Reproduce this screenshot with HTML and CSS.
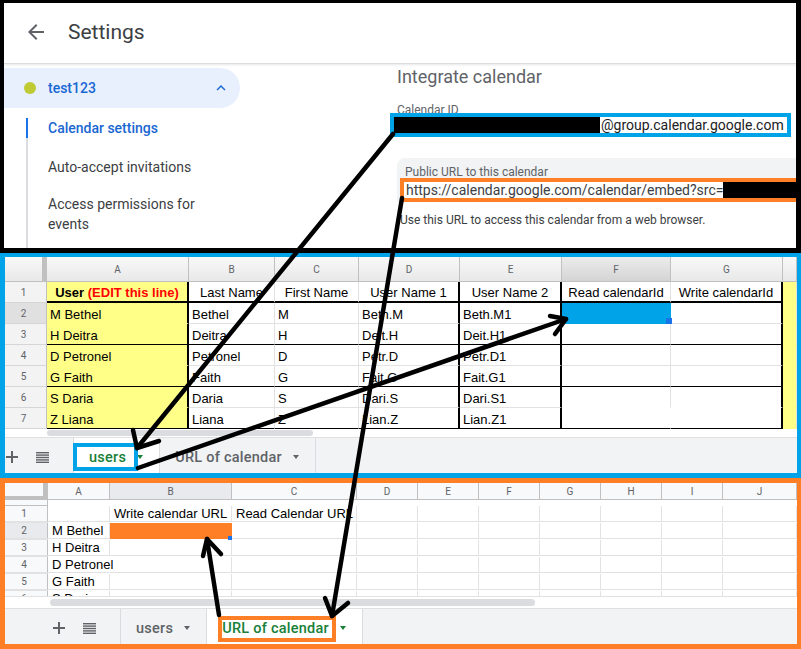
FILE: index.html
```html
<!DOCTYPE html>
<html>
<head>
<meta charset="utf-8">
<title>Settings</title>
<link rel="stylesheet" href="styles.css">
</head>
<body>
<div class="page">
  <section class="cal">
    <header class="cal-head">
      <svg class="back" viewBox="0 0 24 24"><path d="M20 11H7.83l5.59-5.59L12 4l-8 8 8 8 1.41-1.41L7.83 13H20v-2z"/></svg>
      <h1 class="cal-title">Settings</h1>
    </header>
    <div class="cal-body">
      <nav class="cal-nav">
        <div class="cal-pill">
          <span class="dot"></span>
          <span class="pill-name">test123</span>
          <svg class="chev" viewBox="0 0 24 24"><path d="M12 8l-6 6 1.41 1.41L12 10.83l4.59 4.58L18 14z"/></svg>
        </div>
        <ul class="nav-list">
          <li class="nav-item active">Calendar settings</li>
          <li class="nav-item">Auto-accept invitations</li>
          <li class="nav-item">Access permissions for events</li>
        </ul>
      </nav>
      <main class="cal-main">
        <h2 class="int-title">Integrate calendar</h2>
        <div class="field-label id-label">Calendar ID</div>
        <div class="id-box"><span class="redact id-redact"></span><span class="id-text">@group.calendar.google.com</span></div>
        <div class="url-card">
          <div class="field-label">Public URL to this calendar</div>
          <div class="url-box"><span class="url-text">https://calendar.google.com/calendar/embed?src=</span><span class="redact url-redact"></span></div>
        </div>
        <p class="hint">Use this URL to access this calendar from a web browser.</p>
      </main>
    </div>
  </section>

  <section class="sheet sheet-users">
    <div class="grid g1">
      <div class="row hdr">
        <div class="corner"></div>
        <div class="ch">A</div><div class="ch">B</div><div class="ch">C</div><div class="ch">D</div><div class="ch">E</div><div class="ch sel">F</div><div class="ch">G</div><div class="ch"></div>
      </div>
      <div class="row">
        <div class="rh">1</div>
        <div class="c y bb2 br ctr"><b>User <span class="red">(EDIT this line)</span></b></div>
        <div class="c bb2 ctr">Last Name</div>
        <div class="c bb2 ctr">First Name</div>
        <div class="c bb2 br ctr">User Name 1</div>
        <div class="c bb2 br ctr">User Name 2</div>
        <div class="c bb2 ctr">Read calendarId</div>
        <div class="c bb2 br ctr">Write calendarId</div>
        <div class="c y"></div>
      </div>
      <div class="row">
        <div class="rh sel">2</div>
        <div class="c y br">M Bethel</div>
        <div class="c">Bethel</div>
        <div class="c">M</div>
        <div class="c br">Beth.M</div>
        <div class="c br">Beth.M1</div>
        <div class="c fillb"></div>
        <div class="c br"></div>
        <div class="c y"></div>
      </div>
      <div class="row">
        <div class="rh">3</div>
        <div class="c y br bb">H Deitra</div>
        <div class="c bb">Deitra</div>
        <div class="c bb">H</div>
        <div class="c br bb">Deit.H</div>
        <div class="c br bb">Deit.H1</div>
        <div class="c bb"></div>
        <div class="c br bb"></div>
        <div class="c y"></div>
      </div>
      <div class="row">
        <div class="rh">4</div>
        <div class="c y br">D Petronel</div>
        <div class="c">Petronel</div>
        <div class="c">D</div>
        <div class="c br">Petr.D</div>
        <div class="c br">Petr.D1</div>
        <div class="c"></div>
        <div class="c br"></div>
        <div class="c y"></div>
      </div>
      <div class="row">
        <div class="rh">5</div>
        <div class="c y br bb">G Faith</div>
        <div class="c bb">Faith</div>
        <div class="c bb">G</div>
        <div class="c br bb">Fait.G</div>
        <div class="c br bb">Fait.G1</div>
        <div class="c bb"></div>
        <div class="c br bb"></div>
        <div class="c y"></div>
      </div>
      <div class="row">
        <div class="rh">6</div>
        <div class="c y br">S Daria</div>
        <div class="c">Daria</div>
        <div class="c">S</div>
        <div class="c br">Dari.S</div>
        <div class="c br">Dari.S1</div>
        <div class="c nb"></div>
        <div class="c br nb"></div>
        <div class="c y"></div>
      </div>
      <div class="row">
        <div class="rh">7</div>
        <div class="c y br bb">Z Liana</div>
        <div class="c bb">Liana</div>
        <div class="c bb">Z</div>
        <div class="c br bb">Lian.Z</div>
        <div class="c br bb">Lian.Z1</div>
        <div class="c bb nr"></div>
        <div class="c br bb"></div>
        <div class="c y"></div>
      </div>
    </div>
    <div class="hscroll"><div class="thumb"></div></div>
    <div class="tabs shift">
      <svg class="tbtn plus" viewBox="0 0 12 12"><path d="M5 0h2v5h5v2H7v5H5V7H0V5h5z"/></svg>
      <svg class="tbtn list" viewBox="0 0 13 11"><rect y="0" width="13" height="1.4"/><rect y="2.4" width="13" height="1.4"/><rect y="4.8" width="13" height="1.4"/><rect y="7.2" width="13" height="1.4"/><rect y="9.6" width="13" height="1.4"/></svg>
      <div class="tab active">users<span class="tri"></span></div>
      <div class="tab">URL of calendar<span class="tri"></span></div>
    </div>
  </section>

  <section class="sheet sheet-url">
    <div class="grid g2">
      <div class="row hdr">
        <div class="corner"></div>
        <div class="ch">A</div><div class="ch sel">B</div><div class="ch">C</div><div class="ch">D</div><div class="ch">E</div><div class="ch">F</div><div class="ch">G</div><div class="ch">H</div><div class="ch">I</div><div class="ch">J</div><div class="ch"></div>
      </div>
      <div class="row">
        <div class="rh">1</div>
        <div class="c"></div><div class="c">Write calendar URL</div><div class="c">Read Calendar URL</div>
        <div class="c"></div><div class="c"></div><div class="c"></div><div class="c"></div><div class="c"></div><div class="c"></div><div class="c"></div><div class="c"></div>
      </div>
      <div class="row">
        <div class="rh sel">2</div>
        <div class="c">M Bethel</div><div class="c fillo"></div><div class="c"></div>
        <div class="c"></div><div class="c"></div><div class="c"></div><div class="c"></div><div class="c"></div><div class="c"></div><div class="c"></div><div class="c"></div>
      </div>
      <div class="row">
        <div class="rh">3</div>
        <div class="c">H Deitra</div><div class="c"></div><div class="c"></div>
        <div class="c"></div><div class="c"></div><div class="c"></div><div class="c"></div><div class="c"></div><div class="c"></div><div class="c"></div><div class="c"></div>
      </div>
      <div class="row">
        <div class="rh">4</div>
        <div class="c ov">D Petronel</div><div class="c"></div><div class="c"></div>
        <div class="c"></div><div class="c"></div><div class="c"></div><div class="c"></div><div class="c"></div><div class="c"></div><div class="c"></div><div class="c"></div>
      </div>
      <div class="row">
        <div class="rh">5</div>
        <div class="c">G Faith</div><div class="c"></div><div class="c"></div>
        <div class="c"></div><div class="c"></div><div class="c"></div><div class="c"></div><div class="c"></div><div class="c"></div><div class="c"></div><div class="c"></div>
      </div>
      <div class="row">
        <div class="rh">6</div>
        <div class="c">S Daria</div><div class="c"></div><div class="c"></div>
        <div class="c"></div><div class="c"></div><div class="c"></div><div class="c"></div><div class="c"></div><div class="c"></div><div class="c"></div><div class="c"></div>
      </div>
    </div>
    <div class="hscroll"><div class="thumb"></div></div>
    <div class="tabs">
      <svg class="tbtn plus" viewBox="0 0 12 12"><path d="M5 0h2v5h5v2H7v5H5V7H0V5h5z"/></svg>
      <svg class="tbtn list" viewBox="0 0 13 11"><rect y="0" width="13" height="1.4"/><rect y="2.4" width="13" height="1.4"/><rect y="4.8" width="13" height="1.4"/><rect y="7.2" width="13" height="1.4"/><rect y="9.6" width="13" height="1.4"/></svg>
      <div class="tab">users<span class="tri"></span></div>
      <div class="tab active">URL of calendar<span class="tri"></span></div>
    </div>
  </section>

  <svg class="annot" width="801" height="649" viewBox="0 0 801 649">
    <rect x="75" y="445" width="61" height="24" fill="none" stroke="#00a2e8" stroke-width="4"/>
    <rect x="220" y="618" width="114" height="22" fill="none" stroke="#ff7f27" stroke-width="4"/>
    <g stroke="#000" stroke-width="4.5" stroke-linecap="round" stroke-linejoin="round" fill="none">
      <line x1="393" y1="134" x2="137" y2="448"/>
      <polyline points="133,430 137,448 159,441"/>
      <line x1="138" y1="468" x2="566" y2="319"/>
      <polyline points="550,316 566,319 555,334"/>
      <line x1="402" y1="198" x2="332" y2="616"/>
      <polyline points="325,598 332,616 348,603"/>
      <line x1="219" y1="615" x2="207" y2="539"/>
      <polyline points="203,556 207,539 221,554"/>
    </g>
  </svg>
</div>
</body>
</html>
```

FILE: styles.css
```css
* { box-sizing: border-box; margin: 0; padding: 0; }
body { margin: 0; background: #fff; font-family: Roboto, "Liberation Sans", sans-serif; }
.page { position: relative; width: 801px; height: 649px; overflow: hidden; background: #fff; }

/* ---------- calendar settings panel ---------- */
.cal { height: 253px; border: solid #000; border-width: 3px 5px 5px 4px; display: flex; flex-direction: column; overflow: hidden; background: #fff; }
.cal-head { height: 61px; flex: none; display: flex; align-items: center; padding: 0 0 3px 20px; border-bottom: 1px solid #dadce0; box-shadow: 0 1px 2px rgba(60,64,67,.12); }
.back { width: 24px; height: 24px; fill: #5f6368; flex: none; }
.cal-title { margin-left: 20px; font: 400 21px/28px Roboto, sans-serif; color: #3c4043; }
.cal-body { flex: 1; display: flex; min-height: 0; }
.cal-nav { width: 236px; flex: none; display: flex; flex-direction: column; }
.cal-pill { margin-top: 4px; height: 40px; flex: none; display: flex; align-items: center; padding-left: 20px; background: #e8f0fe; border-radius: 0 20px 20px 0; }
.dot { width: 12px; height: 12px; border-radius: 50%; background: #c0ca33; margin-right: 12px; flex: none; }
.pill-name { flex: 1; font: 500 14px/20px Roboto, sans-serif; color: #1967d2; }
.chev { width: 18px; height: 18px; fill: #1967d2; margin-right: 10px; flex: none; }
.nav-list { list-style: none; margin: 10px 0 0 22px; border-left: 2px solid #dadce0; flex: 1; display: flex; flex-direction: column; gap: 18px; }
.nav-item { margin-left: -2px; border-left: 2px solid transparent; padding-left: 20px; width: 190px; font: 400 14px/20px Roboto, sans-serif; color: #3c4043; }
.nav-item.active { border-left-color: #1a73e8; color: #1967d2; font-weight: 500; }
.nav-item + .nav-item { margin-top: 1px; }
.nav-item + .nav-item + .nav-item { margin-top: -1px; }

.cal-main { margin-left: 157px; padding-top: 1px; width: 420px; flex: none; }
.int-title { font: 400 18px/24px Roboto, sans-serif; color: #5f6368; }
.field-label { font: 400 12px/16px Roboto, sans-serif; color: #5f6368; }
.id-label { margin-top: 13px; }
.id-box { position: relative; margin: -5px 0 0 -7px; width: 401px; height: 24px; border: 4px solid #00a2e8; background: #fff; display: flex; align-items: center; }
.redact { background: #000; height: 16px; flex: none; }
.id-redact { width: 206px; }
.id-text { padding-left: 1px; font: 400 14px/16px Roboto, sans-serif; color: #202124; white-space: nowrap; }
.url-card { margin-top: 21px; background: #f1f3f4; border-radius: 8px 0 0 0; padding: 6px 0 0 8px; width: 420px; }
.url-box { position: relative; margin: -2px 0 0 -5px; height: 24px; border: 4px solid #ff7f27; border-right: 0; background: #fff; display: flex; align-items: center; }
.url-text { padding-left: 2px; font: 400 14px/16px Roboto, sans-serif; color: #3c4043; white-space: nowrap; }
.url-redact { flex: 1; }
.hint { margin: 10px 0 0 3px; font: 400 12px/16px Roboto, sans-serif; color: #3c4043; }

/* ---------- spreadsheets ---------- */
.sheet { font-family: "Liberation Sans", Arial, sans-serif; font-size: 13px; color: #000; overflow: hidden; display: flex; flex-direction: column; background: #fff; }
.sheet-users { height: 225px; border: solid #00a2e8; border-width: 4px 4px 5px 5px; }
.sheet-url { height: 171px; border: solid #ff7f27; border-width: 5px 4px 5px 5px; }
.grid { flex: none; overflow: hidden; }
.row { display: grid; }
.g1 .row { grid-template-columns: 42px 142px 86px 84px 101px 102px 109px 112px 1fr; height: 21px; }
.g1 .row.hdr { height: 25px; }
.g2 { height: 113px; }
.g2 .row { grid-template-columns: 43px 62px 122px 125px repeat(6, 61px) 1fr; height: 17px; flex: none; }
.g2 .row.hdr { height: 23px; }

.c { display: flex; align-items: flex-end; padding: 0 3px; white-space: nowrap; min-width: 0; border-right: 1px solid #e2e2e2; border-bottom: 1px solid #e2e2e2; line-height: 16px; }
.g2 .c { line-height: 14px; padding-left: 4px; }
.ctr { justify-content: center; }
.red { color: #f00; }
.y { background: #ffff88; border-bottom-color: #ffff88; }
.nb { border-bottom-color: #fff; }
.nr { border-right-color: #fff; }
.bb { border-bottom: 1px solid #000; }
.bb2 { border-bottom: 2px solid #000; }
.br { border-right: 2px solid #000; }
.ov { border-right-color: transparent; }
.fillb { position: relative; background: #00a2e8; border-bottom-color: #00a2e8; border-right-color: #00a2e8; }
.fillb::after { content: ""; position: absolute; right: -2px; bottom: -1px; width: 6px; height: 6px; background: #1a73e8; }
.fillo { position: relative; background: #ff7f27; border-bottom-color: #ff7f27; border-right-color: #ff7f27; }
.fillo::after { content: ""; position: absolute; right: -1px; bottom: -2px; width: 4px; height: 4px; background: #1a73e8; }

.ch { display: flex; align-items: center; justify-content: center; font: 400 10px Roboto, sans-serif; color: #5f6368; border-right: 1px solid #c0c0c0; border-bottom: 1px solid #c0c0c0; }
.g1 .ch { background: linear-gradient(#f9f9f9, #e8e8e8); }
.g1 .ch.sel { background: linear-gradient(#ececec, #d4d4d4); }
.g2 .ch { background: #f8f9fa; }
.g2 .ch.sel { background: #e8eaed; }
.corner { border-right: 5px solid #c0c0c0; border-bottom: 1px solid #c0c0c0; }
.g1 .corner { background: linear-gradient(#f9f9f9, #e8e8e8); }
.g2 .corner { background: #f8f9fa; border-bottom-width: 4px; }
.rh { display: flex; align-items: center; justify-content: center; padding-right: 4px; font: 400 10px Roboto, sans-serif; color: #5f6368; border-right: 1px solid #c0c0c0; border-bottom: 1px solid #d6d6d6; }
.g1 .rh { background: #f3f3f3; }
.g2 .rh { background: #f8f9fa; border-bottom-color: #e2e2e2; }
.rh.sel { background: #e0e0e0; }
.g2 .rh.sel { background: #e8eaed; }

.hscroll { flex: none; background: #fff; display: flex; align-items: center; }
.thumb { background: #dadce0; border-radius: 4px; }
.sheet-users .hscroll { height: 8px; }
.sheet-users .thumb { margin-left: 42px; width: 266px; height: 6px; }
.sheet-url .hscroll { height: 12px; border-top: 1px solid #e2e2e2; }
.sheet-url .thumb { margin-left: 45px; width: 485px; height: 7px; }

.tabs { flex: none; height: 36px; background: #f1f3f4; border-top: 1px solid #e0e0e0; display: flex; align-items: stretch; padding-left: 48px; }
.tabs.shift { padding-left: 1px; }
.tbtn { align-self: center; fill: #5f6368; flex: none; margin-top: 3px; }
.plus { width: 12px; height: 12px; margin-right: 18px; }
.list { width: 13px; height: 11px; margin-right: 24px; }
.tab { display: flex; align-items: center; gap: 11px; padding: 3px 16px 0 15px; border-left: 1px solid #dadce0; font: 500 14.5px Roboto, sans-serif; letter-spacing: .25px; color: #5f6368; white-space: nowrap; }
.tab:last-child { border-right: 1px solid #dadce0; }
.tab.active { background: #fff; color: #188038; }
.tri { width: 0; height: 0; border-left: 3.5px solid transparent; border-right: 3.5px solid transparent; border-top: 4px solid currentColor; }

.annot { position: absolute; left: 0; top: 0; pointer-events: none; }
```
